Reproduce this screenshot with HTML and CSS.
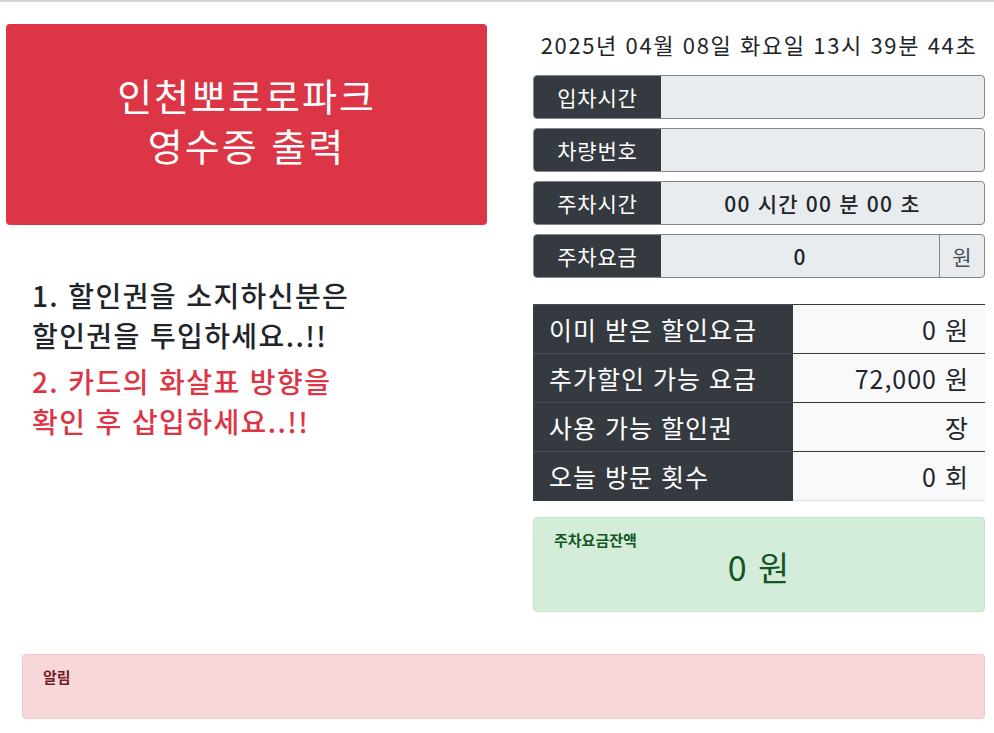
FILE: index.html
```html
<!DOCTYPE html>
<html lang="ko">
<head>
  <meta charset="UTF-8">
  <title>인천뽀로로파크 영수증 출력</title>
  <link rel="stylesheet" href="styles.css">
</head>
<body>
<div class="page">
  <div class="row">
    <div class="col-left">
      <div class="title-box">인천뽀로로파크<br>영수증 출력</div>
      <div class="guide">
        <p class="guide-dark">1. 할인권을 소지하신분은<br>할인권을 투입하세요..!!</p>
        <p class="guide-red">2. 카드의 화살표 방향을<br>확인 후 삽입하세요..!!</p>
      </div>
    </div>
    <div class="col-right">
      <div class="clock">2025년 04월 08일 화요일 13시 39분 44초</div>

      <div class="input-group">
        <span class="label">입차시간</span>
        <span class="field"></span>
      </div>
      <div class="input-group">
        <span class="label">차량번호</span>
        <span class="field"></span>
      </div>
      <div class="input-group">
        <span class="label">주차시간</span>
        <span class="field">00 시간 00 분 00 초</span>
      </div>
      <div class="input-group">
        <span class="label">주차요금</span>
        <span class="field">0</span>
        <span class="addon">원</span>
      </div>

      <table class="summary">
        <tr><th>이미 받은 할인요금</th><td>0 원</td></tr>
        <tr><th>추가할인 가능 요금</th><td>72,000 원</td></tr>
        <tr><th>사용 가능 할인권</th><td>장</td></tr>
        <tr><th>오늘 방문 횟수</th><td>0 회</td></tr>
      </table>

      <div class="alert alert-success">
        <div class="alert-title">주차요금잔액</div>
        <div class="balance">0 원</div>
      </div>
    </div>
  </div>

  <div class="alert alert-danger notice">
    <div class="alert-title">알림</div>
  </div>
</div>
</body>
</html>
```

FILE: styles.css
```css
* {
  box-sizing: border-box;
}
body {
  margin: 0;
  border-top: 2px solid #d4d4d4;
  font-family: "Noto Sans CJK KR", "Noto Sans", sans-serif;
  color: #212529;
  background: #fff;
}
.page {
  padding: 22px 9px 0 6px;
}
.row {
  display: flex;
  gap: 46px;
}
.col-left {
  width: 481px;
}
.col-right {
  width: 452px;
}
.title-box {
  height: 201px;
  padding-bottom: 10px;
  background: #dc3545;
  border-radius: 4px;
  color: #fff;
  font-size: 38px;
  line-height: 50px;
  letter-spacing: 2px;
  text-align: center;
  display: flex;
  align-items: center;
  justify-content: center;
}
.guide {
  padding: 50px 0 0 26px;
  font-size: 28px;
  font-weight: 500;
}
.guide p {
  margin: 0;
  line-height: 40px;
  letter-spacing: 1.4px;
}
.guide-red {
  color: #dc3545;
  margin-top: 6px !important;
}
.clock {
  text-align: center;
  font-size: 22px;
  line-height: 40px;
  margin-bottom: 11px;
  letter-spacing: 1.6px;
}
.input-group {
  display: flex;
  height: 44px;
  border: 1px solid #80868c;
  border-radius: 4px;
  overflow: hidden;
  margin-bottom: 9px;
  background: #e9ecef;
  font-size: 21px;
}
.label {
  width: 127px;
  background: #343a40;
  color: #fff;
  letter-spacing: 0.8px;
  display: flex;
  align-items: center;
  justify-content: center;
}
.field {
  flex: 1;
  display: flex;
  align-items: center;
  justify-content: center;
  font-weight: 500;
  letter-spacing: 1.2px;
}
.addon {
  width: 45px;
  border-left: 1px solid #80868c;
  color: #495057;
  display: flex;
  align-items: center;
  justify-content: center;
}
.summary {
  width: 100%;
  margin-top: 26px;
  border-collapse: collapse;
  font-size: 25px;
  letter-spacing: 1px;
}
.summary th,
.summary td {
  height: 49px;
  padding: 0 16px;
  border-top: 1px solid #343a40;
}
.summary th {
  width: 260px;
  background: #343a40;
  border-top-color: #454d55;
  color: #fff;
  font-weight: 400;
  text-align: left;
}
.summary td {
  background: #f8f9fa;
  text-align: right;
}
.summary tr:last-child td {
  border-bottom: 1px solid #dee2e6;
}
.alert {
  border: 1px solid;
  border-radius: 4px;
  padding: 12px 20px;
}
.alert-title {
  font-size: 15px;
  font-weight: 700;
  line-height: 20px;
}
.alert-success {
  margin-top: 16px;
  height: 95px;
  background: #d4edda;
  border-color: #c3e6cb;
  color: #155724;
}
.balance {
  text-align: center;
  font-size: 34px;
  line-height: 40px;
  margin-top: -3px;
  letter-spacing: 1px;
}
.alert-danger {
  background: #f8d7da;
  border-color: #f5c6cb;
  color: #721c24;
}
.notice {
  margin: 42px 0 0 16px;
  height: 65px;
}
```
